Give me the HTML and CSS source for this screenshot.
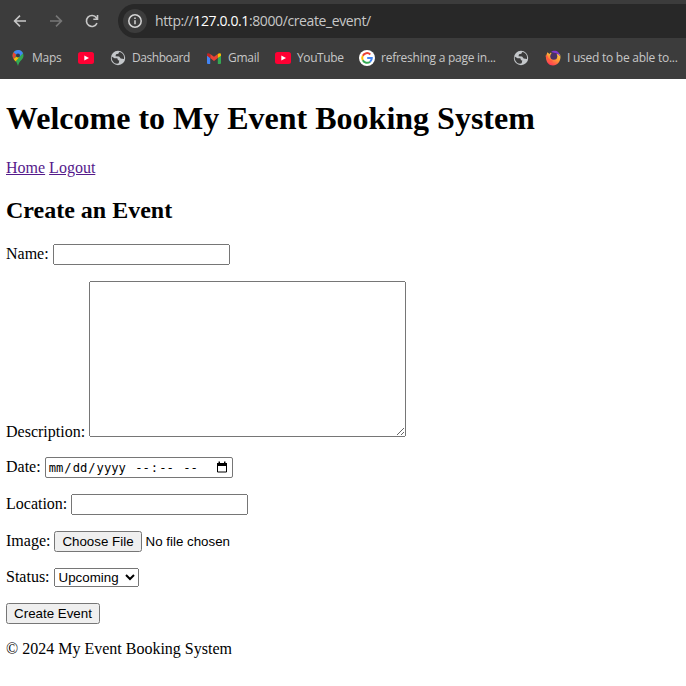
FILE: index.html
```
<!DOCTYPE html>
<html lang="en">
<head>
<meta charset="utf-8">
<title>Create an Event</title>
<link rel="stylesheet" href="styles.css">
</head>
<body>
<svg class="defs" width="0" height="0" aria-hidden="true">
  <symbol id="globe" viewBox="0 0 16 16">
    <circle cx="8" cy="8" r="7.2" fill="#c4c7ca"/>
    <path d="M1.700 6.400 4.500 8.200H7.300L8 10.200l1.300.4-.6 2.700C5 14.800 1.200 11 1.700 6.400ZM9.300 2 8.300 3.700 6 4.300l-.5 1.900 3.600.4 1.600 1.900 3.300.6C14.600 5.300 12.500 2.500 9.300 2Z" fill="#3c3c3c"/>
  </symbol>
  <symbol id="youtube" viewBox="0 0 16 12">
    <rect width="16" height="12" rx="2.500" fill="#ff0033"/>
    <path d="M6.300 3.400v5.200L11 6z" fill="#fff"/>
  </symbol>
</svg>
<header class="browser">
  <div class="toolbar">
    <svg class="nav back" viewBox="0 0 16 16"><path d="M14 8H3M8 2.600 2.600 8 8 13.400"/></svg>
    <svg class="nav forward" viewBox="0 0 16 16"><path d="M2 8h11M8 2.600 13.400 8 8 13.400"/></svg>
    <svg class="nav reload" viewBox="0 0 16 16"><path d="M13 10.200A5.500 5.500 0 1 1 12.400 4.700L13.400 6M13.500 2v4.200H9.300"/></svg>
    <div class="address">
      <span class="info"><svg viewBox="0 0 16 16"><circle cx="8" cy="8" r="6.200"/><path d="M8 7.300v4M8 4.600v1.500"/></svg></span>
      <span class="url">http://<b>127.0.0.1</b>:8000/create_event/</span>
    </div>
  </div>
  <nav class="bookmarks">
    <a class="mark maps"><svg viewBox="0 0 12 16"><path d="M6 0a5.500 5.500 0 0 0-5.500 5.700C.5 9.500 4.800 10.400 6 16c1.200-5.600 5.500-6.500 5.500-10.300A5.500 5.500 0 0 0 6 0Z" fill="#34a853"/><path d="M1.600 2.200 4.400 4.600 1.900 9.300C.2 7 .1 4.100 1.600 2.200Z" fill="#ea4335"/><path d="M1.600 2.200A5.500 5.500 0 0 1 11 3.300L7.200 7 4.400 4.600Z" fill="#4285f4"/><path d="M4.500 6.800 7.400 7 3.500 11.400 1.600 9Z" fill="#fbbc04"/><circle cx="6" cy="5.600" r="2" fill="#303b50"/></svg><span>Maps</span></a>
    <a class="mark tube"><svg><use href="#youtube"/></svg></a>
    <a class="mark dash"><svg><use href="#globe"/></svg><span>Dashboard</span></a>
    <a class="mark gmail"><svg viewBox="0 0 14 11"><path d="M0 1.500V10q0 1 1 1h2.200V5Z" fill="#4285f4"/><path d="M14 1.500V10q0 1-1 1h-2.200V5Z" fill="#34a853"/><path d="M3.200.9 7 3.800 10.800.9V5L7 7.900 3.200 5Z" fill="#ea4335"/><path d="M0 1.600C0 0 1.800-.2 3.200.9V5L0 2.700Z" fill="#c5221f"/><path d="M14 1.600C14 0 12.200-.2 10.800.9V5L14 2.700Z" fill="#fbbc04"/></svg><span>Gmail</span></a>
    <a class="mark tube2"><svg><use href="#youtube"/></svg><span>YouTube</span></a>
    <a class="mark google"><svg viewBox="0 0 16 16"><circle cx="8" cy="8" r="8" fill="#fff"/><g fill="none" stroke-width="2"><path d="M11.300 4.400A4.800 4.800 0 0 0 3.800 5.700" stroke="#ea4335"/><path d="M3.800 5.700a4.800 4.800 0 0 0 0 4.600" stroke="#fbbc05"/><path d="M3.800 10.300a4.800 4.800 0 0 0 7.300 1.400" stroke="#34a853"/><path d="M11.100 11.700A4.800 4.800 0 0 0 12.800 8H8.200" stroke="#4285f4"/></g></svg><span>refreshing a page in...</span></a>
    <a class="mark plain"><svg><use href="#globe"/></svg></a>
    <a class="mark fox"><svg viewBox="0 0 16 16"><defs><linearGradient id="flame" x1=".8" y1="0" x2=".3" y2="1"><stop offset="0" stop-color="#ffe047"/><stop offset=".5" stop-color="#ff9636"/><stop offset="1" stop-color="#ff3058"/></linearGradient></defs><path d="M2.500 2.200 4.300 4 6 2.500l1 2L14.800 4C17 9 13.500 15.500 8 15.500 2.300 15.500-1 9 2.500 2.200Z" fill="url(#flame)"/><path d="M6 2C9-.7 14.800.6 15.200 6.500L12.800 4Z" fill="#8136cf"/><circle cx="8.800" cy="6.300" r="3.500" fill="#493264"/><path d="M1.500 5.500C1.500 8 4 11.500 7.500 11.500" stroke="#ff593f" stroke-width="2" fill="none"/></svg><span>I used to be able to...</span></a>
  </nav>
</header>
<main>
  <h1>Welcome to My Event Booking System</h1>
  <p class="links"><a href="#">Home</a> <a href="#">Logout</a></p>
  <h2>Create an Event</h2>
  <form>
    <div class="row"><label for="name">Name:</label><input class="text" id="name" type="text"></div>
    <div class="row area"><label for="description">Description:</label><textarea id="description"></textarea></div>
    <div class="row"><label>Date:</label>
      <div class="datetime" tabindex="0"><span>mm</span>/<span>dd</span>/<span>yyyy</span> <span>--</span>:<span>--</span> <span>--</span><svg viewBox="0 0 12 12"><path d="M1.500 2.500h9v8.500h-9z" fill="none" stroke="#000"/><path d="M1 2h10v3H1zM2.500.5H4V3H2.500zM8 .5h1.500V3H8z"/></svg></div>
    </div>
    <div class="row"><label for="location">Location:</label><input class="text" id="location" type="text"></div>
    <div class="row"><label for="image">Image:</label><input id="image" type="file"></div>
    <div class="row status"><label for="status">Status:</label><select id="status"><option>Upcoming</option></select></div>
    <button type="button">Create Event</button>
  </form>
  <footer>© 2024 My Event Booking System</footer>
</main>
</body>
</html>
```
FILE: styles.css
```
* { box-sizing: border-box; }
body { margin: 0; background: #fff; color: #000; font: 16px/18px "Liberation Serif", serif; overflow: hidden; }
.defs { display: block; }
.browser { height: 79px; background: #3c3c3c; font-family: "Open Sans", sans-serif; overflow: hidden; }
.toolbar { height: 42px; padding: 4px 0 4px 12px; display: flex; align-items: center; }
.nav { width: 16px; height: 16px; margin-right: 20px; fill: none; stroke: #c7c7c7; stroke-width: 1.6; flex: none; }
.forward { stroke: #777; }
.reload { margin-right: 18px; }
.address { flex: 1; height: 34px; padding-left: 5px; background: #282828; border-radius: 17px 0 0 17px; display: flex; align-items: center; }
.info { width: 24px; height: 24px; border-radius: 12px; background: #3c3c3c; display: grid; place-items: center; margin-right: 8px; }
.info svg { width: 16px; height: 16px; fill: none; stroke: #d5d5d5; stroke-width: 1.5; }
.url { font-size: 14px; color: #c7c7c7; white-space: pre; letter-spacing: -.39px; }
.url b { font-weight: 400; color: #fff; }
.bookmarks { height: 32px; padding-left: 12px; display: flex; align-items: center; font-size: 12px; letter-spacing: -.25px; color: #c7c7c7; white-space: nowrap; }
.mark { display: flex; align-items: center; flex: none; gap: 6px; }
.mark svg { width: 16px; height: 16px; flex: none; }
.maps { width: 66px; gap: 8px; }
.maps svg { width: 12px; }
.tube { width: 32px; }
.tube svg, .tube2 svg { height: 12px; }
.dash { width: 97px; letter-spacing: -.45px; }
.gmail { width: 68px; gap: 7px; }
.gmail svg { width: 14px; height: 11px; }
.tube2 { width: 84px; letter-spacing: -.4px; }
.google { width: 154px; }
.plain { width: 32px; }
main { padding: 0 6px; }
h1 { margin: 21px 0 22px; font-size: 32px; line-height: 37px; white-space: nowrap; }
.links { margin: 0 0 20px; }
.links a { color: #551a8b; }
h2 { margin: 0 0 20px; font-size: 24px; line-height: 27px; }
.row { display: flex; align-items: center; gap: 4px; height: 21px; margin-bottom: 16px; }
.row label { margin-top: -1px; }
input, textarea, select, button { margin: 0; font: 13.333px/15px "Liberation Sans", sans-serif; color: #000; }
.text { width: 177px; height: 21px; }
.area { height: 156px; align-items: flex-end; margin-bottom: 20px; }
.row.area label { margin: 0 0 -4px; }
textarea { width: 317px; height: 156px; }
.datetime { width: 188px; height: 21px; padding: 1px 4px 0 2px; border: 1px solid #767676; border-radius: 2px; display: flex; align-items: center; font: 12.17px/17px "DejaVu Sans Mono", monospace; white-space: pre; }
.datetime span { padding: 0 1px; }
.datetime span:nth-of-type(4), .datetime span:nth-of-type(6) { margin-left: 7.33px; }
.datetime svg { width: 12px; height: 12px; margin: 0 0 2px auto; }
#image { width: 200px; height: 21px; }
.status { height: 19px; margin-bottom: 16px; }
#status { width: 85px; height: 19px; }
button { display: block; width: 94px; height: 21px; padding: 0; }
footer { margin-top: 16px; }
```
